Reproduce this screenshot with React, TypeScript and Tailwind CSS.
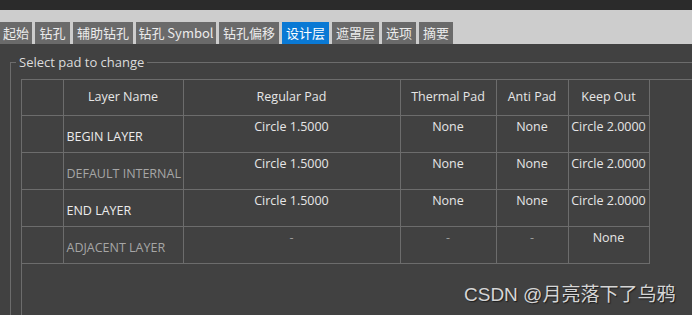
const tabs = [
  { label: "起始", w: "w-[32px]" },
  { label: "钻孔", w: "w-[35px]" },
  { label: "辅助钻孔", w: "w-[60px]" },
  { label: "钻孔 Symbol", w: "w-[80px]" },
  { label: "钻孔偏移", w: "w-[60px]" },
  { label: "设计层", w: "w-[47px]", active: true },
  { label: "遮罩层", w: "w-[47px]" },
  { label: "选项", w: "w-[34px]" },
  { label: "摘要", w: "w-[34px]" },
];

type Row = {
  name: string;
  dim?: boolean;
  regular: string;
  thermal: string;
  anti: string;
  keep: string;
};

const rows: Row[] = [
  { name: "BEGIN LAYER", regular: "Circle 1.5000", thermal: "None", anti: "None", keep: "Circle 2.0000" },
  { name: "DEFAULT INTERNAL", dim: true, regular: "Circle 1.5000", thermal: "None", anti: "None", keep: "Circle 2.0000" },
  { name: "END LAYER", regular: "Circle 1.5000", thermal: "None", anti: "None", keep: "Circle 2.0000" },
  { name: "ADJACENT LAYER", dim: true, regular: "-", thermal: "-", anti: "-", keep: "None" },
];

const cell = "border-r border-b border-[#6c6c6c] p-0";

function ValueCell({ v }: { v: string }) {
  const isDash = v === "-";
  return (
    <td className={`${cell} align-top text-center pt-[3px] whitespace-nowrap ${isDash ? "text-[#9c9c9c]" : "text-[#e6e6e6]"}`}>
      {v}
    </td>
  );
}

export default function App() {
  return (
    <div
      className="relative w-[692px] h-[315px] overflow-hidden bg-[#414141] flex flex-col text-[12.5px] leading-[16px]"
      style={{ fontFamily: '"Open Sans", "Noto Sans CJK SC", sans-serif' }}
    >
      {/* title strip */}
      <div className="h-[10px] bg-[#2b2b2b]" />
      <div className="h-[34px] bg-[#cdcdcd] flex items-end gap-[3px]">
        {tabs.map((t) => (
          <div
            key={t.label}
            className={`${t.w} h-[22px] flex items-center justify-center text-[13px] whitespace-nowrap ${
              t.active ? "bg-[#0a79d4] text-white" : "bg-[#6a6a6a] text-[#ececec]"
            }`}
            style={{ fontFamily: '"Noto Sans CJK SC", "Open Sans", sans-serif' }}
          >
            {t.label}
          </div>
        ))}
      </div>

      {/* group box */}
      <div className="relative flex-1 mt-[18px] ml-[10px] border-t border-l border-[#6c6c6c] pl-[10px] pt-[16px] flex">
        <div className="absolute -top-[9px] left-[5px] px-[3px] bg-[#414141] text-[#dcdcdc] text-[13px] leading-[16px]">
          Select pad to change
        </div>

        <div className="flex-1 border-t border-l border-[#6c6c6c]">
          <table className="border-collapse table-fixed w-[627px]">
            <colgroup>
              <col className="w-[41px]" />
              <col className="w-[120px]" />
              <col className="w-[217px]" />
              <col className="w-[96px]" />
              <col className="w-[72px]" />
              <col className="w-[81px]" />
            </colgroup>
            <thead>
              <tr className="h-[35px] text-[#e6e6e6]">
                <th className={`${cell} font-normal`} />
                <th className={`${cell} font-normal text-center`}>Layer Name</th>
                <th className={`${cell} font-normal text-center`}>Regular Pad</th>
                <th className={`${cell} font-normal text-center`}>Thermal Pad</th>
                <th className={`${cell} font-normal text-center`}>Anti Pad</th>
                <th className={`${cell} font-normal text-center`}>Keep Out</th>
              </tr>
            </thead>
            <tbody>
              {rows.map((r) => (
                <tr key={r.name} className="h-[37px]">
                  <td className={cell} />
                  <td
                    className={`${cell} align-top pt-[13px] pl-[3px] whitespace-nowrap ${
                      r.dim ? "text-[#a6a6a6]" : "text-[#ececec]"
                    }`}
                  >
                    {r.name}
                  </td>
                  <ValueCell v={r.regular} />
                  <ValueCell v={r.thermal} />
                  <ValueCell v={r.anti} />
                  <ValueCell v={r.keep} />
                </tr>
              ))}
            </tbody>
          </table>
        </div>
      </div>

      {/* watermark */}
      <div
        className="absolute left-[464px] top-[283px] text-[19px] leading-[24px] text-[#d6d6d6] whitespace-nowrap"
        style={{ fontFamily: '"Liberation Sans", "Noto Sans CJK SC", sans-serif', textShadow: "1px 1px 1px #1e1e1e" }}
      >
        CSDN @月亮落下了乌鸦
      </div>
    </div>
  );
}
